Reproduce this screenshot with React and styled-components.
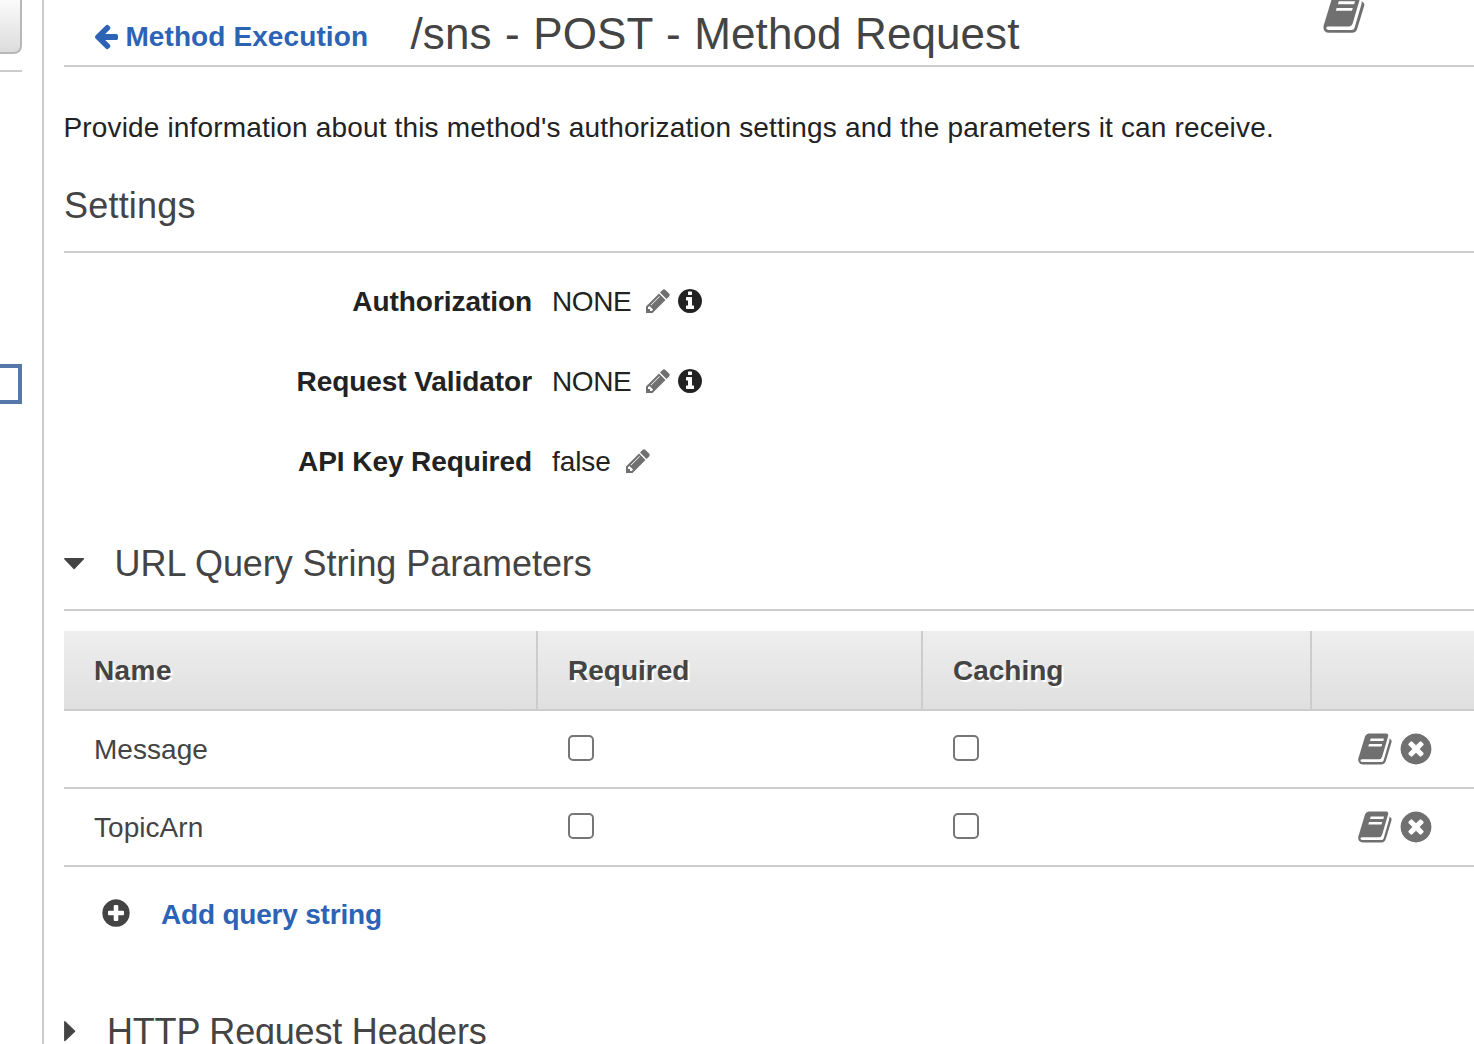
import React from "react";
import styled, { createGlobalStyle } from "styled-components";

const Global = createGlobalStyle`
  * { box-sizing: border-box; }
  html, body { margin: 0; padding: 0; overflow: hidden; background: #fff; }
  body {
    font-family: "Liberation Sans", Arial, Helvetica, sans-serif;
    font-size: 28px;
    line-height: 40px;
    color: #222;
  }
`;

/* ---------- icons ---------- */

const Glyph = styled.svg`
  display: block;
  flex: none;
  width: ${(p) => p.$size}px;
  height: ${(p) => p.$size}px;
  fill: ${(p) => p.$color};
`;

const DISC = "M1664 896q0 209-103 385.5t-279.5 279.5-385.5 103-385.5-103-279.5-279.5-103-385.5 103-385.5 279.5-279.5 385.5-103 385.5 103 279.5 279.5 103 385.5z";

const PATHS = {
  arrow:
    "M1664 896v128q0 53-32.5 90.5t-84.5 37.5h-704l293 294q38 36 38 90t-38 90l-75 76q-37 37-90 37-52 0-91-37l-651-652q-37-37-37-90 0-52 37-91l651-650q38-38 91-38 52 0 90 38l75 74q38 38 38 91t-38 91l-293 293h704q52 0 84.5 37.5t32.5 90.5z",
  pencil:
    "M491 1536l91-91-235-235-91 91v107h128v128h107zm523-928q0-22-22-22-10 0-17 7l-542 542q-7 7-7 17 0 22 22 22 10 0 17-7l542-542q7-7 7-17zm-54-192l416 416-832 832h-416v-416zm683 96q0 53-37 90l-166 166-416-416 166-165q36-38 90-38 53 0 91 38l235 234q37 39 37 91z",
  info:
    "M1152 1376v-160q0-14-9-23t-23-9h-96v-512q0-14-9-23t-23-9h-320q-14 0-23 9t-9 23v160q0 14 9 23t23 9h96v320h-96q-14 0-23 9t-9 23v160q0 14 9 23t23 9h448q14 0 23-9t9-23zm-128-896v-160q0-14-9-23t-23-9h-192q-14 0-23 9t-9 23v160q0 14 9 23t23 9h192q14 0 23-9t9-23z" + DISC,
  remove:
    "M1277 1122q0-26-19-45l-181-181 181-181q19-19 19-45 0-27-19-46l-90-90q-19-19-46-19-26 0-45 19l-181 181-181-181q-19-19-45-19-27 0-46 19l-90 90q-19 19-19 46 0 26 19 45l181 181-181 181q-19 19-19 45 0 27 19 46l90 90q19 19 46 19 26 0 45-19l181-181 181 181q19 19 45 19 27 0 46-19l90-90q19-19 19-46z" + DISC,
  plus:
    "M1344 960v-128q0-26-19-45t-45-19h-256v-256q0-26-19-45t-45-19h-128q-26 0-45 19t-19 45v256h-256q-26 0-45 19t-19 45v128q0 26 19 45t45 19h256v256q0 26 19 45t45 19h128q26 0 45-19t19-45v-256h256q26 0 45-19t19-45z" + DISC,
};

function Icon({ name, size = 28, color = "#707070" }) {
  return (
    <Glyph $size={size} $color={color} viewBox="0 0 1792 1792" aria-hidden="true">
      <path fillRule="evenodd" d={PATHS[name]} />
    </Glyph>
  );
}

function Book({ size }) {
  return (
    <Glyph $size={size} $color="#707070" viewBox="0 0 36 36" aria-hidden="true">
      <path
        fillRule="evenodd"
        d="M11.6 2.5H29.2Q31.6 2.6 31.2 5L25.2 25.4Q24.4 28.2 21.8 28.3H5.4Q3.6 28.3 3.4 29.4Q3.6 31 5.8 31H24.4Q26 31 26.6 29.4L32.2 10.2Q32.6 8.8 32.4 7.6Q35.1 8.9 34.6 11L28.9 29.8Q27.8 33.4 24.6 33.4H5.8Q1.1 33.2 1.2 28.6Q1.2 27.4 1.8 26L8 5.6Q9 2.8 11.6 2.5ZM13.7 7.6L13 10H26.3L27 7.6ZM12 13L11.3 15.4H24.5L25.2 13Z"
      />
    </Glyph>
  );
}

const CaretSvg = styled.svg`
  display: block;
  flex: none;
  fill: #444;
  stroke: #444;
  stroke-width: 1.4;
  stroke-linejoin: round;
`;

function Caret({ open }) {
  return open ? (
    <CaretSvg width="21" height="12" viewBox="0 0 21 12">
      <path d="M0.8 0.8H19.4L10.1 10.6Z" />
    </CaretSvg>
  ) : (
    <CaretSvg width="12" height="23" viewBox="0 0 12 23">
      <path d="M0.8 0.8V19.6L10.6 10.2Z" />
    </CaretSvg>
  );
}

/* ---------- page frame ---------- */

const Page = styled.div`
  display: flex;
  width: 100vw;
  height: 100vh;
  overflow: hidden;
`;

const Rail = styled.aside`
  flex: none;
  width: 44px;
  padding-right: 20px;
  border-right: 2px solid #ccc;
`;

const RailButton = styled.div`
  height: 54px;
  background: linear-gradient(#fbfbfb, #dcdcdc);
  border: solid #b8b8b8;
  border-width: 0 2px 2px 0;
  border-bottom-right-radius: 8px;
`;

const RailRule = styled.div`
  margin-top: 16px;
  height: 2px;
  background: #ccc;
`;

const RailSelection = styled.div`
  margin-top: 292px;
  height: 40px;
  border: 4px solid #5577a9;
  border-left: 0;
`;

const Main = styled.main`
  flex: 1;
  min-width: 0;
  padding-left: 20px;
`;

/* ---------- header ---------- */

const Header = styled.header`
  display: flex;
  align-items: flex-start;
  height: 67px;
  padding-left: 28px;
  padding-right: 108px;
  border-bottom: 2px solid #ccc;
`;

const BackLink = styled.a`
  display: flex;
  align-items: center;
  gap: 5.4px;
  height: 42px;
  margin-top: 15px;
  width: 318.5px;
  font-weight: bold;
  letter-spacing: 0.1px;
  color: #2d63b5;
  text-decoration: none;
`;

const BackText = styled.span`
  padding-top: 2px;
`;

const Title = styled.h1`
  margin: 9px 0 0;
  font-size: 44px;
  line-height: 50px;
  font-weight: normal;
  letter-spacing: 0.08px;
  word-spacing: 1.2px;
  color: #444;
  white-space: nowrap;
`;

const HeaderAction = styled.div`
  margin: -8px 0 0 auto;
`;

/* ---------- settings ---------- */

const Intro = styled.p`
  margin: 41px 0 0 -0.6px;
  letter-spacing: 0.165px;
  white-space: nowrap;
`;

const SectionTitle = styled.h2`
  display: flex;
  align-items: center;
  gap: ${(p) => p.$gap || 0}px;
  height: ${(p) => p.$height}px;
  margin: 0;
  padding-top: ${(p) => p.$drop || 0}px;
  border-bottom: 2px solid #ccc;
  font-size: 36px;
  line-height: 42px;
  font-weight: normal;
  letter-spacing: ${(p) => p.$track || 0}px;
  color: #444;
  white-space: nowrap;
`;

const Settings = styled.dl`
  display: grid;
  grid-auto-rows: 40px;
  row-gap: 40px;
  margin: 28px 0 0;
`;

const Setting = styled.div`
  display: grid;
  grid-template-columns: 468px 1fr;
  column-gap: 20px;
`;

const Label = styled.dt`
  padding-top: 1px;
  font-weight: bold;
  letter-spacing: -0.06px;
  text-align: right;
`;

const Value = styled.dd`
  display: flex;
  align-items: center;
  gap: 4px;
  height: 40px;
  margin: 0;
`;

const ValueText = styled.span`
  width: ${(p) => p.$width}px;
  padding-top: 2px;
  letter-spacing: ${(p) => p.$track}px;
`;

/* ---------- parameter table ---------- */

const Table = styled.div`
  margin-top: 20px;
  color: #444;
`;

const Row = styled.div`
  display: grid;
  grid-template-columns: 474px 385px 389px 1fr;
  height: 78px;
  border-bottom: 2px solid #ccc;
`;

const HeadRow = styled(Row)`
  height: 80px;
  background: linear-gradient(#eee, #dfdfdf);
  font-weight: bold;
  text-shadow: 2px 2px 0 #fff;
`;

const HeadCell = styled.div`
  display: flex;
  align-items: center;
  padding-left: 30px;
  padding-top: 1px;
  letter-spacing: ${(p) => p.$track || 0}px;
  border-right: 2px solid #ccc;

  &:last-child {
    border-right: 0;
  }
`;

const Cell = styled.div`
  display: flex;
  align-items: center;
  padding: 1px 0 0 30px;
  letter-spacing: 0.05px;
`;

const CheckCell = styled(Cell)`
  padding: 0 0 2px 30px;
`;

const ActionCell = styled(Cell)`
  padding: 0 0 0 45px;
  gap: 5px;
`;

const Checkbox = styled.input.attrs({ type: "checkbox" })`
  appearance: none;
  width: 26px;
  height: 26px;
  margin: 0;
  background: #fff;
  border: 2px solid #767676;
  border-radius: 5px;
`;

const AddRow = styled.div`
  display: flex;
  align-items: center;
  gap: 29.5px;
  height: 40px;
  margin: 26px 0 0 35.5px;
`;

const AddLink = styled.a`
  padding-top: 3px;
  font-weight: bold;
  letter-spacing: -0.2px;
  color: #2d63b5;
  text-decoration: none;
`;

const settings = [
  { label: "Authorization", value: "NONE", width: 88, track: -0.4, info: true },
  { label: "Request Validator", value: "NONE", width: 88, track: -0.4, info: true },
  { label: "API Key Required", value: "false", width: 68, track: -0.1 },
];

const columns = [
  { title: "Name", track: 0.4 },
  { title: "Required", track: 0 },
  { title: "Caching", track: 0 },
  { title: "" },
];

const parameters = ["Message", "TopicArn"];

export default function App() {
  return (
    <Page>
      <Global />
      <Rail>
        <RailButton />
        <RailRule />
        <RailSelection />
      </Rail>
      <Main>
        <Header>
          <BackLink>
            <Icon name="arrow" color="#2d63b5" />
            <BackText>Method Execution</BackText>
          </BackLink>
          <Title>/sns - POST - Method Request</Title>
          <HeaderAction>
            <Book size={44} />
          </HeaderAction>
        </Header>

        <Intro>
          Provide information about this method's authorization settings and the parameters it can receive.
        </Intro>

        <SectionTitle $height={105} $drop={12} $track={0.2}>
          Settings
        </SectionTitle>
        <Settings>
          {settings.map((s) => (
            <Setting key={s.label}>
              <Label>{s.label}</Label>
              <Value>
                <ValueText $width={s.width} $track={s.track}>
                  {s.value}
                </ValueText>
                <Icon name="pencil" />
                {s.info && <Icon name="info" color="#222" />}
              </Value>
            </Setting>
          ))}
        </Settings>

        <SectionTitle $height={130} $gap={29.5} $drop={37} $track={-0.06}>
          <Caret open />
          URL Query String Parameters
        </SectionTitle>
        <Table>
          <HeadRow>
            {columns.map((c) => (
              <HeadCell key={c.title} $track={c.track}>
                {c.title}
              </HeadCell>
            ))}
          </HeadRow>
          {parameters.map((name) => (
            <Row key={name}>
              <Cell>{name}</Cell>
              <CheckCell>
                <Checkbox />
              </CheckCell>
              <CheckCell>
                <Checkbox />
              </CheckCell>
              <ActionCell>
                <Book size={36} />
                <Icon name="remove" size={36} />
              </ActionCell>
            </Row>
          ))}
        </Table>
        <AddRow>
          <Icon name="plus" size={32} color="#444" />
          <AddLink>Add query string</AddLink>
        </AddRow>

        <SectionTitle $height={200} $gap={31} $drop={0} $track={-0.2}>
          <Caret />
          HTTP Request Headers
        </SectionTitle>
      </Main>
    </Page>
  );
}
